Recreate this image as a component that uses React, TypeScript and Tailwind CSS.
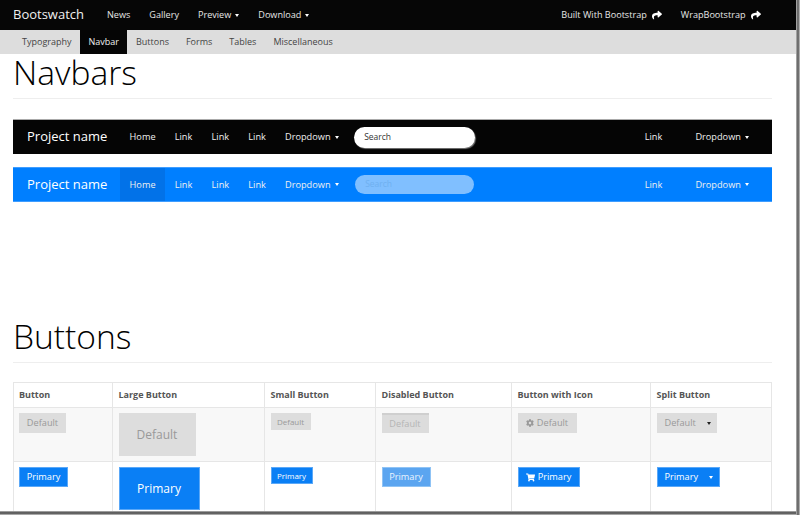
import type { ReactNode } from "react";
import { FaShare, FaCog, FaShoppingCart } from "react-icons/fa";

function Caret({ color = "border-t-white" }: { color?: string }) {
  return <span className={`inline-block ml-[4px] w-0 h-0 border-x-[2.5px] border-x-transparent border-t-[3px] ${color}`} />;
}

function TopLink({ children }: { children: ReactNode }) {
  return <a className="px-[9.5px] text-[#e6e6e6] text-[9.1px] leading-[30px] flex items-center whitespace-nowrap">{children}</a>;
}

function BarLink({ children, active }: { children: ReactNode; active?: boolean }) {
  return (
    <a className={`h-full px-[9.6px] flex items-center text-[9.2px] text-[#f0f0f0] whitespace-nowrap ${active ? "bg-[#0272e8]" : ""}`}>
      {children}
    </a>
  );
}

function Navbar({ blue }: { blue?: boolean }) {
  return (
    <div className={`w-[759px] h-[35px] ml-[13px] flex items-center pl-[14px] pr-[13.5px] ${blue ? "bg-[#007fff] border-y border-[#3f9dff]" : "bg-[#050505] border-t border-[#aaaaaa]"}`}>
      <span className="text-[13px] text-white w-[93px] whitespace-nowrap">Project name</span>
      <div className="flex items-center h-full">
        <BarLink active={blue}>Home</BarLink>
        <BarLink>Link</BarLink>
        <BarLink>Link</BarLink>
        <BarLink>Link</BarLink>
        <BarLink>Dropdown<Caret /></BarLink>
      </div>
      <div className={`rounded-full flex items-center pl-[10px] text-[8.5px] ${blue ? "ml-[7px] w-[119px] h-[19px] bg-[#80bfff] text-[#6fb0f0]" : "ml-[6px] w-[121px] h-[21px] bg-white text-[#333333] shadow-[1px_1px_1px_#777]"}`}>
        Search
      </div>
      <div className="ml-auto flex items-center h-full gap-[14px]">
        <BarLink>Link</BarLink>
        <BarLink>Dropdown<Caret /></BarLink>
      </div>
    </div>
  );
}

function Btn({ label, cls, icon, split }: { label: string; cls: string; icon?: ReactNode; split?: string }) {
  return (
    <span className={`flex items-center ${cls}`}>
      {icon}
      {label}
      {split ? <Caret color={split} /> : null}
    </span>
  );
}

const heads = ["Button", "Large Button", "Small Button", "Disabled Button", "Button with Icon", "Split Button"];
const widths = ["w-[99px]", "w-[152px]", "w-[111px]", "w-[136px]", "w-[139px]", "w-[121px]"];
const d = "bg-[#dddddd] text-[#999999] justify-center";
const p = "bg-[#0a7ff5] text-white border border-[#5aa8f8] justify-center";
const td = "border border-[#e6e6e6] pl-[5.5px] pt-[5px] align-top";
const td1 = "border border-[#e6e6e6] pl-[5px] pt-[5px] align-top";

export default function App() {
  return (
    <div className="w-[800px] h-[515px] overflow-hidden bg-white relative font-['Open_Sans','Noto_Sans',sans-serif]">
      <header className="h-[30px] bg-[#060606] flex items-center pl-[13px] pr-[30px]">
        <span className="text-[13px] text-[#f0f0f0] w-[84.5px] whitespace-nowrap">Bootswatch</span>
        <nav className="flex">
          <TopLink>News</TopLink>
          <TopLink>Gallery</TopLink>
          <TopLink>Preview<Caret /></TopLink>
          <TopLink>Download<Caret /></TopLink>
        </nav>
        <nav className="ml-auto flex">
          <TopLink>Built With Bootstrap<FaShare className="ml-[5px] text-white text-[10px]" /></TopLink>
          <TopLink>WrapBootstrap<FaShare className="ml-[5px] text-white text-[10px]" /></TopLink>
        </nav>
      </header>
      <nav className="h-[24px] bg-[#dddddd] flex pl-[13.5px] text-[#444444] text-[9px]">
        <a className="px-[8.5px] flex items-center">Typography</a>
        <a className="px-[8.5px] flex items-center bg-[#050505] text-[#f0f0f0]">Navbar</a>
        <a className="px-[8.5px] flex items-center">Buttons</a>
        <a className="px-[8.5px] flex items-center">Forms</a>
        <a className="px-[8.5px] flex items-center">Tables</a>
        <a className="px-[8.5px] flex items-center">Miscellaneous</a>
      </nav>

      <section className="w-[759px] ml-[13px] h-[45px] border-b border-[#eeeeee]">
        <h1 className="text-[33.6px] leading-[36px] text-black font-light">Navbars</h1>
      </section>
      <div className="mt-[20px] flex flex-col gap-[13px]">
        <Navbar />
        <Navbar blue />
      </div>

      <section className="w-[759px] ml-[13px] mt-[116px] h-[45px] border-b border-[#eeeeee]">
        <h1 className="text-[33.6px] leading-[36px] text-black font-light">Buttons</h1>
      </section>

      <table className="ml-[13px] mt-[19px] w-[758px] table-fixed border-collapse">
        <colgroup>
          {widths.map((w, i) => <col key={i} className={w} />)}
        </colgroup>
        <thead>
          <tr className="h-[25px]">
            {heads.map((h, i) => (
              <th key={h} className={`border border-[#e6e6e6] ${i === 0 ? "pl-[5px]" : "pl-[5.5px]"} pr-[4px] text-left text-[9px] font-bold text-[#555555]`}>{h}</th>
            ))}
          </tr>
        </thead>
        <tbody>
          <tr className="h-[54px] bg-[#f8f8f8]">
            <td className={td1}><Btn label="Default" cls={`${d} w-[47px] h-[20px] text-[9.2px]`} /></td>
            <td className={td}><Btn label="Default" cls={`${d} w-[77px] h-[43px] text-[12px]`} /></td>
            <td className={td}><Btn label="Default" cls={`${d} w-[40px] h-[17px] text-[8px]`} /></td>
            <td className={td}><Btn label="Default" cls="justify-center bg-[#dcdcdc] text-[#b5b5b5] border-t-2 border-[#cfcfcf] w-[47px] h-[20px] text-[9.2px]" /></td>
            <td className={td}><Btn label="Default" icon={<FaCog className="mr-[3px] text-[8px]" />} cls={`${d} w-[59px] h-[20px] text-[9.2px]`} /></td>
            <td className={td}><Btn label="Default" split="border-t-[#222222]" cls="bg-[#dddddd] text-[#999999] w-[60px] h-[20px] text-[9.2px] pl-[8px] gap-[7px]" /></td>
          </tr>
          <tr className="h-[54px]">
            <td className={td1}><Btn label="Primary" cls={`${p} w-[49px] h-[20px] text-[9.2px]`} /></td>
            <td className={td}><Btn label="Primary" cls={`${p} w-[81px] h-[43px] text-[12px]`} /></td>
            <td className={td}><Btn label="Primary" cls={`${p} w-[42px] h-[17px] text-[8px]`} /></td>
            <td className={td}><Btn label="Primary" cls="justify-center bg-[#5ba5f0] text-[#eaf4ff] border border-[#8fc3f5] w-[49px] h-[20px] text-[9.2px]" /></td>
            <td className={td}><Btn label="Primary" icon={<FaShoppingCart className="mr-[3px] text-[9px]" />} cls={`${p} w-[62px] h-[20px] text-[9.2px]`} /></td>
            <td className={td}><Btn label="Primary" split="border-t-white" cls="bg-[#0a7ff5] text-white border border-[#5aa8f8] w-[63px] h-[20px] text-[9.2px] pl-[7px] gap-[7px]" /></td>
          </tr>
        </tbody>
      </table>

      <div className="absolute left-0 right-0 bottom-0 h-[4px] bg-gradient-to-b from-[#bbbbbb] via-[#444444] to-[#cccccc]" />
      <div className="absolute top-0 bottom-0 right-0 w-[4px] bg-gradient-to-r from-[#bbbbbb] via-[#555555] to-[#cccccc]" />
    </div>
  );
}
